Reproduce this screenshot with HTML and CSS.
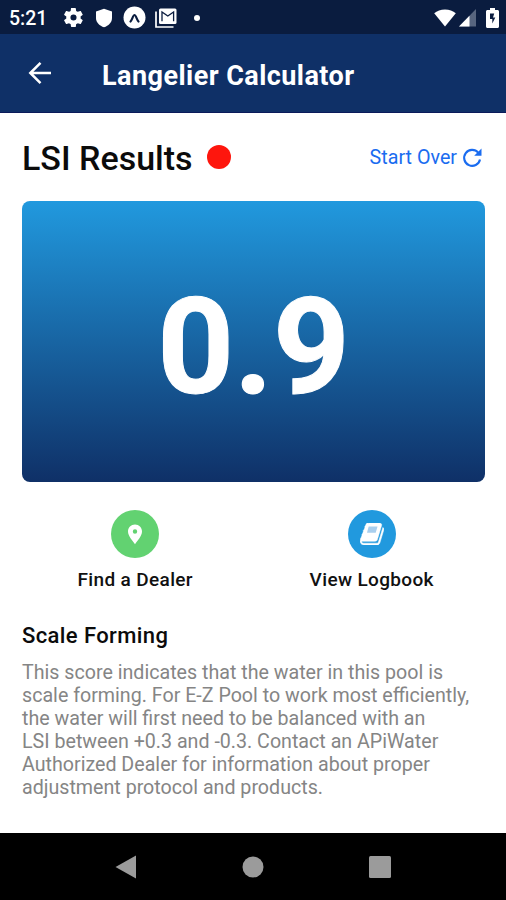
FILE: index.html
```html
<!DOCTYPE html>
<html lang="en">
<head>
    <meta charset="UTF-8">
    <meta name="viewport" content="width=device-width, initial-scale=1.0">
    <title>Langelier Calculator</title>
    <link rel="stylesheet" href="styles.css">
</head>
<body>

<div class="phone">
    <div class="status-bar">
        <span class="clock">5:21</span>
        <svg class="gear" width="21" height="21" viewBox="1 1 22 22"><path fill="#fff" d="M19.4 13c0-.3.1-.6.1-1s0-.7-.1-1l2.1-1.6c.2-.2.3-.4.1-.6l-2-3.5c-.1-.2-.4-.3-.6-.2l-2.5 1c-.5-.4-1.1-.7-1.7-1l-.4-2.6c0-.3-.2-.5-.5-.5h-4c-.2 0-.5.2-.5.4L9 5.1c-.6.3-1.2.6-1.7 1l-2.5-1c-.2-.1-.5 0-.6.2l-2 3.500c-.1.2-.1.5.1.6L4.500 11c0 .3-.1.7-.1 1s0 .7.1 1l-2.200 1.600c-.2.2-.2.4-.1.6l2 3.500c.1.2.4.3.6.2l2.500-1c.5.4 1.100.7 1.700 1l.4 2.600c0 .3.2.5.5.5h4c.2 0 .5-.2.5-.4l.4-2.700c.6-.3 1.200-.6 1.700-1l2.500 1c.2.1.5 0 .6-.2l2-3.500c.1-.2.1-.5-.1-.6zM12 15.200a3.200 3.200 0 1 1 0-6.400 3.200 3.200 0 0 1 0 6.400z"/></svg>
        <svg class="shield" width="18" height="20" viewBox="0 0 18 20"><path fill="#fff" d="M9 .7 17 3.500v6.500c0 4.500-3.600 7.800-8 9.300-4.400-1.500-8-4.800-8-9.300V3.500z"/></svg>
        <svg class="expo" width="23" height="23" viewBox="0 0 23 23"><circle cx="11.500" cy="11.500" r="11" fill="#fff"/><path d="M7.500 15.500c1.600-1.500 2.600-6.500 4-6.500s2.400 5 4 6.500" fill="none" stroke="#0a1c3f" stroke-width="2.200" stroke-linecap="round"/></svg>
        <svg class="mail" width="22" height="20" viewBox="0 0 22 20"><path d="M1 3.500V19h17.500" fill="none" stroke="#fff" stroke-width="1.700"/><rect x="4" y=".5" width="17.500" height="15.500" rx="1.500" fill="#fff"/><path d="M7 13.300V4l5.800 4L18.600 4v9.300" fill="none" stroke="#0a1c3f" stroke-width="1.300"/></svg>
        <span class="dot"></span>
        <svg class="wifi" width="22" height="18" viewBox="0 0 22 18"><path fill="#fff" d="M11 17.500.2 4.300C3 1.800 6.700.5 11 .5s8 1.300 10.800 3.800z"/></svg>
        <svg class="signal" width="17" height="18" viewBox="0 0 17 18"><path fill="#57657f" d="M17 0v17.500H0z"/><path fill="#fff" d="M10.500 6.700v10.800H0z"/></svg>
        <svg class="battery" width="13" height="20" viewBox="0 0 13 20"><path fill="#fff" d="M4 0h5v2h2.500c.8 0 1.500.6 1.500 1.500v15c0 .9-.7 1.500-1.500 1.500h-10C.7 20 0 19.400 0 18.500v-15C0 2.600.7 2 1.500 2H4z"/><path fill="#0a1c3f" d="M8.200 5.500H4v5.500h2.300v4.500l3-6H7z"/></svg>
    </div>

    <div class="app-bar">
        <svg class="back" width="24" height="24" viewBox="0 0 24 24"><path d="M23 12H2.500M12.500 1.800 2.300 12l10.200 10.200" fill="none" stroke="#fff" stroke-width="2.500"/></svg>
        <h1>Langelier Calculator</h1>
    </div>

    <div class="content">
        <div class="results-header">
            <h2>LSI Results</h2>
            <span class="indicator"></span>
            <a class="start-over">Start Over
                <svg width="20" height="20" viewBox="0 0 20 20"><path d="M16.200 4.600A8 8 0 1 0 18 11.500" fill="none" stroke="#1a6cf0" stroke-width="2.100"/><path fill="#1a6cf0" d="M19.500.5v7.300h-7.300z"/></svg>
            </a>
        </div>

        <div class="score">0.9</div>

        <div class="actions">
            <div class="action">
                <div class="circle green">
                    <svg width="16" height="21" viewBox="0 0 16 21"><path fill="#fff" fill-rule="evenodd" d="M8 .5c4 0 7 3 7 7 0 4.500-4.500 9-7 12.800C5.500 16.500 1 12 1 7.500c0-4 3-7 7-7zM8 5.300a2.200 2.200 0 1 0 0 4.400 2.200 2.200 0 0 0 0-4.400z"/></svg>
                </div>
                <span>Find a Dealer</span>
            </div>
            <div class="action">
                <div class="circle blue">
                    <svg width="24" height="22" viewBox="0 128 1664 1536"><path fill="#fff" stroke="#fff" stroke-width="35" d="M1639 478q40 57 18 129l-275 906q-19 64-76.500 107.500t-122.500 43.500h-923q-77 0-148.500-53.500t-99.500-131.500q-24-67-2-127 0-4 3-27t4-37q1-8-3-21.500t-3-19.500q2-11 8-21t16.500-23.500 16.500-23.500q23-38 45-91.500t30-91.500q3-10 .5-30t-.5-28q3-11 17-28t17-23q21-36 42-92t25-90q1-9-2.500-32t.5-28q4-13 22-30.500t22-22.500q19-26 42.500-84.500t27.500-96.500q1-8-3-25.500t-2-26.500q2-8 9-18t18-23 17-21q8-12 16.500-30.500t15-35 16-36 19.500-32 26.500-23.500 36-11.500 47.500 5.500l-1 3q38-9 51-9h761q74 0 114 56t18 130l-274 906q-36 119-71.500 153.500t-128.500 34.500h-869q-27 0-38 15-11 16-1 43 24 70 144 70h923q29 0 56-15.500t35-41.500l300-987q7-22 5-57 38 15 59 43z"/><path fill="#a9cfee" d="M600 380h620l-130 420H480z"/></svg>
                </div>
                <span>View Logbook</span>
            </div>
        </div>

        <h3>Scale Forming</h3>
        <p>This score indicates that the water in this pool is<br>
        scale forming. For E-Z Pool to work most efficiently,<br>
        the water will first need to be balanced with an<br>
        LSI between +0.3 and -0.3. Contact an APiWater<br>
        Authorized Dealer for information about proper<br>
        adjustment protocol and products.</p>
    </div>

    <div class="nav-bar">
        <svg width="22" height="24" viewBox="0 0 22 24"><path fill="#9b9b9b" d="M21 .5v23L.5 12z"/></svg>
        <svg width="22" height="22" viewBox="0 0 22 22"><circle cx="11" cy="11" r="10.500" fill="#9b9b9b"/></svg>
        <svg width="22" height="22" viewBox="0 0 22 22"><rect width="22" height="22" rx="1.500" fill="#9b9b9b"/></svg>
    </div>
</div>

</body>
</html>
```
FILE: styles.css
```css
body {
    margin: 0;
    background: #fff;
    font-family: Roboto, "Liberation Sans", sans-serif;
}
.phone {
    display: flex;
    flex-direction: column;
    width: 506px;
    height: 900px;
    overflow: hidden;
}
h1, h2, h3, p {
    margin: 0;
}
svg {
    display: block;
    flex: none;
}

/* Status bar */
.status-bar {
    display: flex;
    align-items: center;
    box-sizing: border-box;
    height: 34px;
    padding: 1px 7px 0 9px;
    background: #0a1c3f;
    color: #fff;
}
.clock {
    width: 54px;
    padding-top: 2px;
    font-size: 19.5px;
    font-weight: 500;
}
.shield {
    margin-left: 11px;
}
.expo {
    margin-left: 10px;
}
.mail {
    margin-left: 9px;
}
.dot {
    width: 6px;
    height: 6px;
    margin-left: 17px;
    border-radius: 50%;
    background: #fff;
}
.wifi {
    margin-left: auto;
}
.signal {
    margin-left: 3px;
}
.battery {
    margin-left: 10px;
}

/* App bar */
.app-bar {
    display: flex;
    align-items: center;
    box-sizing: border-box;
    height: 79px;
    padding-left: 28px;
    background: #0f3067;
    border-bottom: 1px solid #0a1a5a;
    color: #fff;
}
.app-bar h1 {
    margin-left: 50px;
    padding-top: 5px;
    font-size: 27px;
    line-height: 32px;
    font-weight: 700;
    letter-spacing: 0.45px;
    white-space: nowrap;
}

/* Results */
.content {
    flex: 1;
    padding: 0 21px 0 22px;
}
.results-header {
    display: flex;
    align-items: center;
    height: 88px;
}
.results-header h2 {
    font-size: 34px;
    font-weight: 500;
    color: #0b0b0b;
    padding-top: 2px;
}
.indicator {
    width: 24px;
    height: 24px;
    margin-left: 14px;
    border-radius: 50%;
    background: #fe160d;
}
.start-over {
    display: flex;
    align-items: center;
    gap: 5px;
    margin-left: auto;
    padding: 1px 3px 0 0;
    font-size: 19.7px;
    color: #1a6cf0;
}
.score {
    display: flex;
    justify-content: center;
    align-items: center;
    box-sizing: border-box;
    height: 281px;
    padding-top: 12px;
    border-radius: 8px;
    background: linear-gradient(#2199de, #0f3067);
    color: #fff;
    font-size: 134px;
    font-weight: 700;
    -webkit-text-stroke: 1px #fff;
}
.actions {
    display: flex;
    margin: 28px -5px 0 -5px;
}
.action {
    flex: 1;
    display: flex;
    flex-direction: column;
    align-items: center;
    font-size: 19px;
    font-weight: 500;
    line-height: 24px;
    letter-spacing: 0.35px;
    color: #111;
}
.action span {
    margin-top: 10px;
}
.circle {
    display: flex;
    justify-content: center;
    align-items: center;
    width: 48px;
    height: 48px;
    border-radius: 50%;
}
.green {
    background: #62d271;
}
.blue {
    background: #2199de;
}
h3 {
    margin-top: 30px;
    font-size: 22px;
    line-height: 28px;
    font-weight: 500;
    letter-spacing: 0.4px;
    color: #0b0b0b;
}
p {
    margin-top: 11px;
    font-size: 19.65px;
    line-height: 23px;
    color: #858585;
    white-space: nowrap;
}

/* System navigation */
.nav-bar {
    display: flex;
    justify-content: space-between;
    align-items: center;
    box-sizing: border-box;
    height: 67px;
    padding: 0 115px;
    background: #000;
}
```
